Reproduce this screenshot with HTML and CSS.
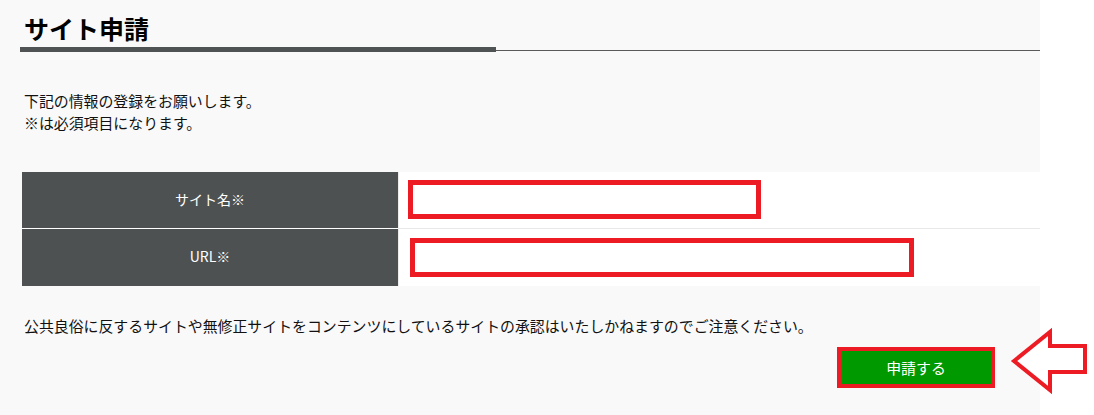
FILE: index.html
```html
<!DOCTYPE html>
<html lang="ja">
<head>
<meta charset="utf-8">
<title>サイト申請</title>
<link rel="stylesheet" href="styles.css">
</head>
<body>
<div class="page">
  <h1 class="title">サイト申請</h1>
  <div class="rule"><span class="rule-thick"></span><span class="rule-thin"></span></div>
  <p class="intro">下記の情報の登録をお願いします。<br>※は必須項目になります。</p>
  <div class="form-table">
    <div class="label first">サイト名※</div>
    <div class="field first"><input class="box box-name" type="text"></div>
    <div class="label">URL※</div>
    <div class="field"><input class="box box-url" type="text"></div>
  </div>
  <p class="note">公共良俗に反するサイトや無修正サイトをコンテンツにしているサイトの承認はいたしかねますのでご注意ください。</p>
  <div class="actions"><button class="submit" type="button">申請する</button></div>
</div>
<svg class="arrow" width="86" height="72" viewBox="0 0 86 72">
  <polygon points="6,35 42,6 42,20 77,20 77,46 42,46 42,64" fill="#fff" stroke="#ed1c24" stroke-width="4" stroke-linejoin="miter"/>
</svg>
</body>
</html>
```
FILE: styles.css
```css
html, body {
  margin: 0;
  padding: 0;
  background: #ffffff;
}
body {
  font-family: "Noto Sans CJK JP", "Noto Sans", sans-serif;
  color: #111;
  width: 1094px;
  height: 415px;
  overflow: hidden;
}
.page {
  width: 1040px;
  height: 415px;
  background: #f9f9f9;
  box-sizing: border-box;
}
.title {
  margin: 0;
  padding: 13px 0 0 24px;
  font-size: 25px;
  line-height: 30px;
  font-weight: bold;
  color: #000;
}
.rule {
  display: flex;
  align-items: flex-end;
  margin: 4px 0 0 20px;
}
.rule-thick {
  width: 476px;
  height: 5px;
  background: #505354;
}
.rule-thin {
  flex: 1;
  height: 1px;
  margin-bottom: 1px;
  background: #5a5a5a;
}
.intro {
  margin: 38px 0 0 0;
  padding-left: 24px;
  font-size: 14.9px;
  line-height: 22px;
}
.form-table {
  display: grid;
  grid-template-columns: 376px 1fr;
  margin: 38px 0 0 22px;
}
.label {
  background: #4e5152;
  color: #fff;
  font-size: 14px;
  height: 57px;
  box-sizing: border-box;
  padding-bottom: 3px;
  display: flex;
  align-items: center;
  justify-content: center;
}
.label.first {
  height: 57px;
  border-bottom: 1px solid #fff;
}
.field {
  background: #fff;
  border-left: 1px solid #ececec;
  height: 57px;
  box-sizing: border-box;
}
.field.first {
  height: 57px;
  border-bottom: 1px solid #e8e8e8;
}
.box {
  display: block;
  box-sizing: border-box;
  height: 39px;
  border: 5px solid #ed1c24;
  background: #fff;
  padding: 0;
  outline: none;
}
.box-name {
  width: 353px;
  margin: 8px 0 0 9px;
}
.box-url {
  width: 504px;
  margin: 9px 0 0 11px;
}
.note {
  margin: 29px 0 0 0;
  padding-left: 24px;
  font-size: 14.9px;
  line-height: 22px;
}
.actions {
  display: flex;
  justify-content: flex-end;
  padding-right: 45px;
  margin-top: 10px;
}
.submit {
  width: 158px;
  height: 41px;
  box-sizing: border-box;
  border: 4px solid #ed1c24;
  background: #009900;
  color: #fff;
  font-family: "Noto Sans CJK JP", "Noto Sans", sans-serif;
  font-size: 14.9px;
  padding: 0;
  cursor: pointer;
}
.arrow {
  position: absolute;
  left: 1008px;
  top: 326px;
}
```
